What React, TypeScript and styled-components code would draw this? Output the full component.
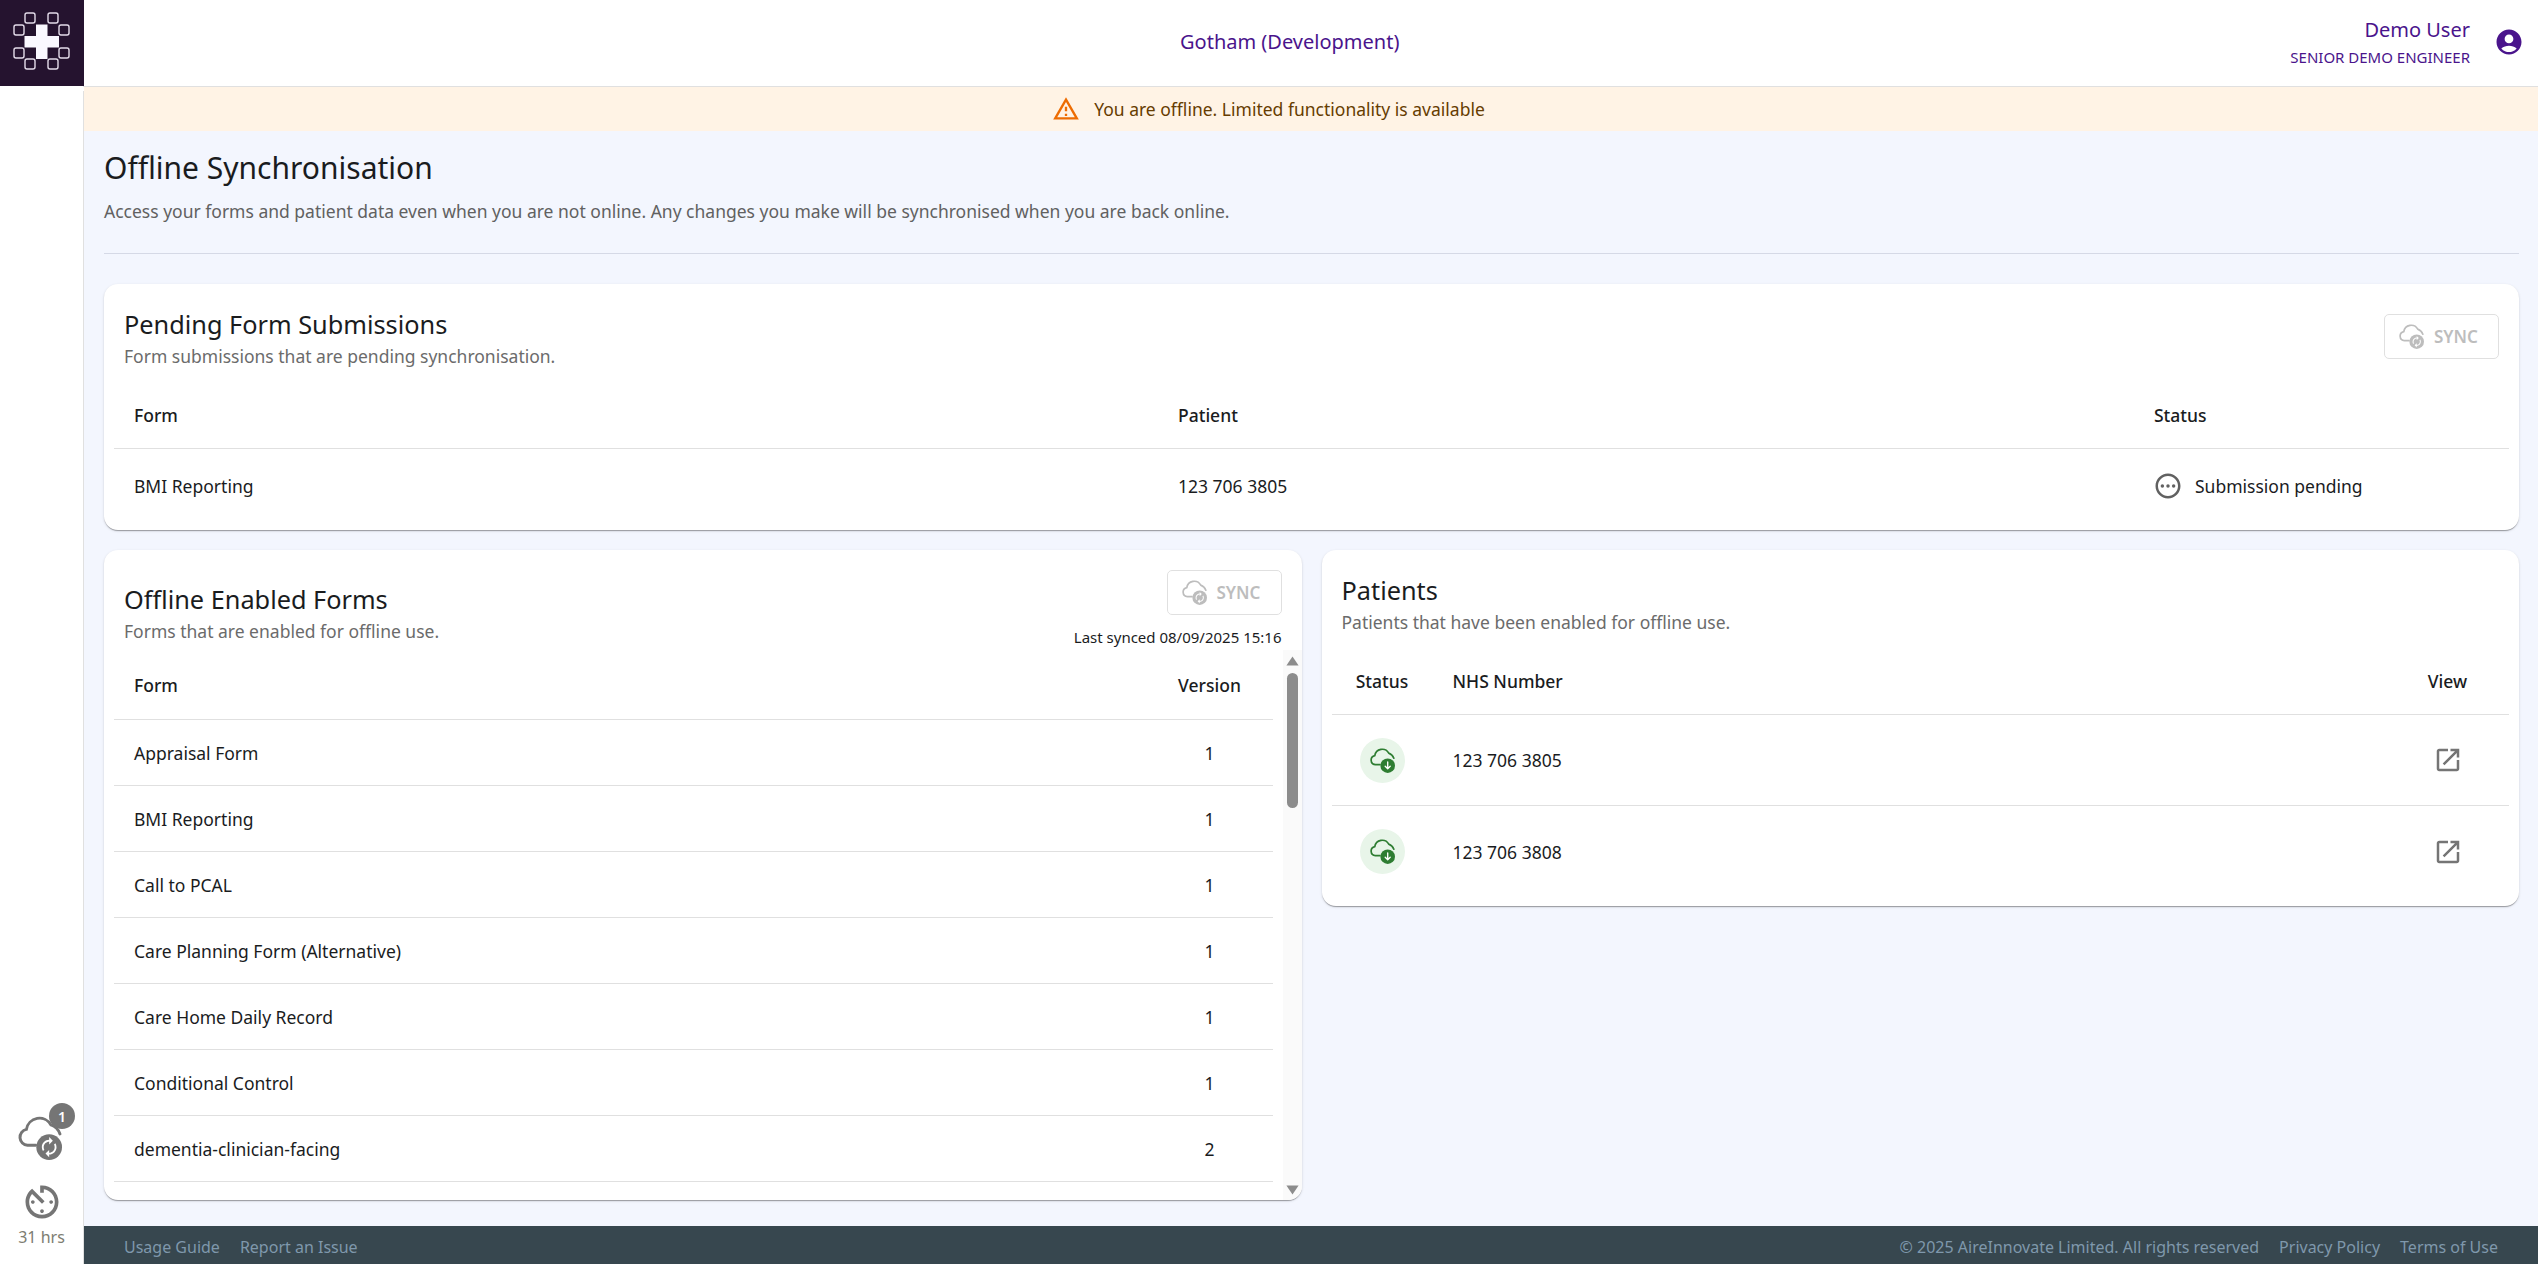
import styled, { createGlobalStyle } from "styled-components";

const GlobalStyle = createGlobalStyle`
  * {
    box-sizing: border-box;
  }

  html,
  body {
    margin: 0;
    height: 100%;
    overflow: hidden;
  }

  body {
    font-family: "Noto Sans", "Liberation Sans", sans-serif;
    font-size: 17.5px;
    color: #1a1c1e;
    background: #ffffff;
  }
`;

const Page = styled.div`
  display: flex;
  width: 100vw;
  height: 100vh;
`;

const Sidebar = styled.aside`
  display: flex;
  flex-direction: column;
  align-items: center;
  flex: 0 0 84px;
  padding-bottom: 17px;
  background: #ffffff;
  border-right: 1px solid #e0e0e0;
`;

const LogoBox = styled.div`
  flex: 0 0 87px;
  width: 84px;
  margin-right: -1px;
  background: #ffffff;
`;

const SidebarBottom = styled.div`
  display: flex;
  flex-direction: column;
  align-items: center;
  margin-top: auto;
`;

const CloudWrap = styled.div`
  position: relative;
  width: 44px;
  height: 44px;
  margin-left: -3px;
  color: #757575;
`;

const CountBadge = styled.span`
  position: absolute;
  top: -13px;
  right: -13px;
  display: flex;
  align-items: center;
  justify-content: center;
  width: 26px;
  height: 26px;
  border-radius: 50%;
  background: #757575;
  color: #ffffff;
  font-size: 14px;
  font-weight: 600;
`;

const TimerIcon = styled.svg`
  display: block;
  width: 44px;
  height: 44px;
  margin-top: 20px;
  fill: #757575;
`;

const TimerLabel = styled.div`
  margin-top: 3px;
  font-size: 16px;
  line-height: 20px;
  color: #7d7d72;
`;

const Content = styled.div`
  display: flex;
  flex-direction: column;
  flex: 1;
  min-width: 0;
`;

const Header = styled.header`
  display: grid;
  grid-template-columns: 1097px auto 1fr;
  align-items: center;
  flex: 0 0 87px;
  padding-bottom: 3px;
  border-bottom: 1px solid #e0e0e0;
  margin-left: -1px;
  color: #4a148c;
`;

const Tenant = styled.div`
  grid-column: 2;
  font-size: 20px;
`;

const UserBlock = styled.div`
  display: flex;
  align-items: center;
  justify-self: end;
  gap: 24px;
  padding-right: 14px;
`;

const UserText = styled.div`
  text-align: right;
`;

const UserName = styled.div`
  font-size: 20px;
  line-height: 26px;
`;

const UserRole = styled.div`
  margin-top: 4px;
  font-size: 15px;
  line-height: 20px;
`;

const AccountIcon = styled.svg`
  width: 30px;
  height: 30px;
  fill: #4a148c;
`;

const Banner = styled.div`
  display: flex;
  align-items: center;
  justify-content: center;
  gap: 14px;
  flex: 0 0 44px;
  padding-right: 85px;
  background: #fff3e5;
  color: #663c00;
`;

const WarnIcon = styled.svg`
  width: 28px;
  height: 28px;
  fill: #ed6c02;
`;

const Main = styled.main`
  display: flex;
  flex-direction: column;
  flex: 1;
  min-height: 0;
  padding: 17px 19px 26px 20px;
  background: #f3f6fe;
`;

const PageTitle = styled.h1`
  margin: 0;
  font-size: 30px;
  font-weight: 400;
  line-height: 40px;
`;

const PageSub = styled.p`
  margin: 11px 0 0;
  line-height: 24px;
  color: #616161;
`;

const Divider = styled.hr`
  width: 100%;
  margin: 30px 0;
  border: 0;
  border-top: 1px solid #d5d9e6;
`;

const Card = styled.section`
  display: flex;
  flex-direction: column;
  overflow: hidden;
  background: #ffffff;
  border-radius: 14px;
  box-shadow: 0 2px 1px -1px rgba(0, 0, 0, 0.2), 0 1px 1px rgba(0, 0, 0, 0.14),
    0 1px 3px rgba(0, 0, 0, 0.12);
`;

const CardHead = styled.div<{ $forms?: boolean }>`
  display: flex;
  justify-content: space-between;
  align-items: ${(p) => (p.$forms ? "flex-end" : "flex-start")};
  padding: ${(p) => (p.$forms ? "20px 20px 4px" : "24px 20px 13px")};
`;

const HeadText = styled.div<{ $forms?: boolean }>`
  margin-bottom: ${(p) => (p.$forms ? "3px" : "0")};
`;

const CardTitle = styled.h2`
  margin: 0;
  font-size: 25.3px;
  font-weight: 400;
  line-height: 32px;
`;

const CardSub = styled.p`
  margin: 4px 0 0;
  line-height: 24px;
  color: #6b6b6b;
`;

const SyncColumn = styled.div`
  display: flex;
  flex-direction: column;
  align-items: flex-end;
`;

const SyncButton = styled.button<{ $offset?: boolean }>`
  display: flex;
  align-items: center;
  gap: 10px;
  width: 115px;
  height: 45px;
  margin-top: ${(p) => (p.$offset ? "6px" : "0")};
  padding: 0 0 0 14px;
  background: transparent;
  border: 1px solid #e0e0e0;
  border-radius: 5px;
  color: #bdbdbd;
  font-family: inherit;
  font-size: 17px;
  font-weight: 600;
`;

const LastSynced = styled.div`
  margin-top: 13px;
  font-size: 15px;
  line-height: 18px;
`;

const TableWrap = styled.div`
  padding: 0 10px;
`;

const PendingWrap = styled(TableWrap)`
  padding-bottom: 7px;
`;

const Table = styled.table`
  width: 100%;
  table-layout: fixed;
  border-collapse: separate;
  border-spacing: 0;
`;

const Th = styled.th<{ $w?: number; $center?: boolean; $h: number }>`
  width: ${(p) => (p.$w ? `${p.$w}px` : "auto")};
  height: ${(p) => p.$h}px;
  padding: 0 20px;
  border-bottom: 1px solid #e0e0e0;
  font-weight: 500;
  text-align: ${(p) => (p.$center ? "center" : "left")};
`;

const Td = styled.td<{ $center?: boolean; $h: number; $last?: boolean }>`
  height: ${(p) => p.$h}px;
  padding: 0 20px;
  border-bottom: ${(p) => (p.$last ? "0" : "1px solid #e0e0e0")};
  text-align: ${(p) => (p.$center ? "center" : "left")};
`;

const StatusCell = styled.div`
  display: flex;
  align-items: center;
  gap: 12px;
`;

const PendingIcon = styled.svg`
  width: 30px;
  height: 30px;
  margin-left: -1px;
  fill: #616161;
`;

const Columns = styled.div`
  display: grid;
  grid-template-columns: 1fr 1fr;
  gap: 20px;
  align-items: start;
  flex: 1;
  min-height: 0;
  margin-top: 20px;
`;

const FormsCard = styled(Card)`
  height: 100%;
  min-height: 0;
`;

const FormsBody = styled.div`
  display: flex;
  flex: 1;
  min-height: 0;
`;

const FormsList = styled.div`
  flex: 1;
  min-width: 0;
  padding: 0 10px;
  overflow: hidden;
`;

const ScrollTrack = styled.div`
  display: flex;
  flex-direction: column;
  align-items: center;
  flex: 0 0 19px;
  padding: 6px 0 5px;
  background: #fafafa;
`;

const ScrollThumb = styled.div`
  flex: 0 0 135px;
  width: 11px;
  margin-top: 7px;
  margin-bottom: auto;
  border-radius: 6px;
  background: #8c8c8c;
`;

const ScrollArrow = styled.svg<{ $down?: boolean }>`
  display: block;
  width: 13px;
  height: 10px;
  fill: #8c8c8c;
  transform: ${(p) => (p.$down ? "rotate(180deg)" : "none")};
`;

const GreenCircle = styled.div`
  display: flex;
  align-items: center;
  justify-content: center;
  width: 45px;
  height: 45px;
  margin: 0 auto;
  border-radius: 50%;
  background: #e8f5e9;
  color: #2e7d32;
`;

const OpenIcon = styled.svg`
  display: block;
  width: 30px;
  height: 30px;
  margin: 0 auto;
  fill: #757575;
`;

const PatientsWrap = styled(TableWrap)`
  padding-bottom: 9px;
`;

const Footer = styled.footer`
  display: flex;
  align-items: center;
  justify-content: space-between;
  flex: 0 0 38px;
  padding: 4px 40px 0;
  background: #37474f;
  color: #7f98ac;
  font-size: 16px;
`;

const FooterGroup = styled.div`
  display: flex;
  gap: 20px;
`;

type CloudProps = { size: number; arrow?: boolean };

function CloudStatus({ size, arrow }: CloudProps) {
  return (
    <svg width={size} height={size} viewBox="0 0 24 24" fill="none">
      <path
        d="M9.6 16H5.2A4.4 4.4 0 0 1 4.6 7.3 A 7.2 7.2 0 0 1 18 4.9 Q 21.6 6.2 22.9 9.8"
        stroke="currentColor"
        strokeWidth="1.6"
        strokeLinecap="round"
      />
      <circle cx="17" cy="17" r="7" fill="currentColor" />
      {arrow ? (
        <path
          d="M17 13.4v6.4M14.6 17.5l2.4 2.4 2.4-2.4"
          stroke="#ffffff"
          strokeWidth="1.3"
          strokeLinecap="round"
          strokeLinejoin="round"
        />
      ) : (
        <path
          transform="translate(17 17) scale(-0.5 0.5) translate(-12 -12)"
          fill="#ffffff"
          d="M12 4V1L8 5l4 4V6c3.31 0 6 2.69 6 6 0 1.01-.25 1.97-.7 2.8l1.46 1.46C19.54 15.03 20 13.57 20 12c0-4.42-3.58-8-8-8zm0 14c-3.31 0-6-2.69-6-6 0-1.01.25-1.97.7-2.8L5.24 7.74C4.46 8.97 4 10.43 4 12c0 4.42 3.58 8 8 8v3l4-4-4-4v3z"
        />
      )}
    </svg>
  );
}

const logoSquares = [
  [25, 13],
  [48, 13],
  [14, 25],
  [59, 25],
  [14, 48],
  [59, 48],
  [25, 59],
  [48, 59],
];

function Logo() {
  return (
    <svg width="84" height="86" viewBox="0 0 84 86">
      <rect width="84" height="86" fill="#25132f" />
      <path
        d="M36 24.5h11.5V36H59v11.5H47.5V59H36V47.5H24.5V36H36z"
        fill="#faf8ff"
      />
      {logoSquares.map(([x, y]) => (
        <rect
          key={`${x}-${y}`}
          x={x}
          y={y}
          width="10"
          height="10"
          rx="2"
          fill="none"
          stroke="#e4dcea"
          strokeWidth="1.4"
        />
      ))}
    </svg>
  );
}

const forms = [
  { name: "Appraisal Form", version: 1 },
  { name: "BMI Reporting", version: 1 },
  { name: "Call to PCAL", version: 1 },
  { name: "Care Planning Form (Alternative)", version: 1 },
  { name: "Care Home Daily Record", version: 1 },
  { name: "Conditional Control", version: 1 },
  { name: "dementia-clinician-facing", version: 2 },
];

const patients = ["123 706 3805", "123 706 3808"];

export default function App() {
  return (
    <Page>
      <GlobalStyle />
      <Sidebar>
        <LogoBox>
          <Logo />
        </LogoBox>
        <SidebarBottom>
          <CloudWrap>
            <CloudStatus size={44} />
            <CountBadge>1</CountBadge>
          </CloudWrap>
          <TimerIcon viewBox="0 0 24 24">
            <path d="M11 17c0 .55.45 1 1 1s1-.45 1-1-.45-1-1-1-1 .45-1 1zm0-14v4h2V5.08c3.39.49 6 3.39 6 6.92 0 3.87-3.13 7-7 7s-7-3.13-7-7c0-1.68.59-3.22 1.58-4.42L12 13l1.41-1.41-6.8-6.8v.02C4.42 6.45 3 9.05 3 12c0 4.97 4.03 9 9 9 4.97 0 9-4.03 9-9s-4.03-9-9-9h-1zm7 9c0-.55-.45-1-1-1s-1 .45-1 1 .45 1 1 1 1-.45 1-1zM6 12c0 .55.45 1 1 1s1-.45 1-1-.45-1-1-1-1 .45-1 1z" />
          </TimerIcon>
          <TimerLabel>31 hrs</TimerLabel>
        </SidebarBottom>
      </Sidebar>

      <Content>
        <Header>
          <Tenant>Gotham (Development)</Tenant>
          <UserBlock>
            <UserText>
              <UserName>Demo User</UserName>
              <UserRole>SENIOR DEMO ENGINEER</UserRole>
            </UserText>
            <AccountIcon viewBox="0 0 24 24">
              <path d="M12 2C6.48 2 2 6.48 2 12s4.48 10 10 10 10-4.48 10-10S17.52 2 12 2zm0 4c1.93 0 3.5 1.57 3.5 3.5S13.93 13 12 13s-3.5-1.57-3.5-3.5S10.07 6 12 6zm0 14c-2.03 0-4.43-.82-6.14-2.88C7.55 15.8 9.68 15 12 15s4.45.8 6.14 2.12C16.43 19.18 14.03 20 12 20z" />
            </AccountIcon>
          </UserBlock>
        </Header>

        <Banner>
          <WarnIcon viewBox="0 0 24 24">
            <path d="M12 5.99 19.53 19H4.47L12 5.99M12 2 1 21h22L12 2zm1 14h-2v2h2v-2zm0-6h-2v4h2v-4z" />
          </WarnIcon>
          You are offline. Limited functionality is available
        </Banner>

        <Main>
          <PageTitle>Offline Synchronisation</PageTitle>
          <PageSub>
            Access your forms and patient data even when you are not online. Any
            changes you make will be synchronised when you are back online.
          </PageSub>
          <Divider />

          <Card>
            <CardHead>
              <div>
                <CardTitle>Pending Form Submissions</CardTitle>
                <CardSub>Form submissions that are pending synchronisation.</CardSub>
              </div>
              <SyncButton $offset disabled>
                <CloudStatus size={25} />
                SYNC
              </SyncButton>
            </CardHead>
            <PendingWrap>
              <Table>
                <thead>
                  <tr>
                    <Th $h={68} $w={1044}>
                      Form
                    </Th>
                    <Th $h={68} $w={976}>
                      Patient
                    </Th>
                    <Th $h={68}>Status</Th>
                  </tr>
                </thead>
                <tbody>
                  <tr>
                    <Td $h={74} $last>
                      BMI Reporting
                    </Td>
                    <Td $h={74} $last>
                      123 706 3805
                    </Td>
                    <Td $h={74} $last>
                      <StatusCell>
                        <PendingIcon viewBox="0 0 24 24">
                          <path d="M12 2C6.48 2 2 6.48 2 12s4.48 10 10 10 10-4.48 10-10S17.52 2 12 2zm0 18c-4.42 0-8-3.58-8-8s3.58-8 8-8 8 3.58 8 8-3.58 8-8 8z" />
                          <circle cx="7.5" cy="12" r="1.4" />
                          <circle cx="12" cy="12" r="1.4" />
                          <circle cx="16.5" cy="12" r="1.4" />
                        </PendingIcon>
                        Submission pending
                      </StatusCell>
                    </Td>
                  </tr>
                </tbody>
              </Table>
            </PendingWrap>
          </Card>

          <Columns>
            <FormsCard>
              <CardHead $forms>
                <HeadText $forms>
                  <CardTitle>Offline Enabled Forms</CardTitle>
                  <CardSub>Forms that are enabled for offline use.</CardSub>
                </HeadText>
                <SyncColumn>
                  <SyncButton disabled>
                    <CloudStatus size={25} />
                    SYNC
                  </SyncButton>
                  <LastSynced>Last synced 08/09/2025 15:16</LastSynced>
                </SyncColumn>
              </CardHead>
              <FormsBody>
                <FormsList>
                  <Table>
                    <thead>
                      <tr>
                        <Th $h={70}>Form</Th>
                        <Th $h={70} $w={126} $center>
                          Version
                        </Th>
                      </tr>
                    </thead>
                    <tbody>
                      {forms.map((form) => (
                        <tr key={form.name}>
                          <Td $h={66}>{form.name}</Td>
                          <Td $h={66} $center>
                            {form.version}
                          </Td>
                        </tr>
                      ))}
                    </tbody>
                  </Table>
                </FormsList>
                <ScrollTrack>
                  <ScrollArrow viewBox="0 0 13 10">
                    <path d="M6.5 0.5 12.6 9.5H0.4z" />
                  </ScrollArrow>
                  <ScrollThumb />
                  <ScrollArrow $down viewBox="0 0 13 10">
                    <path d="M6.5 0.5 12.6 9.5H0.4z" />
                  </ScrollArrow>
                </ScrollTrack>
              </FormsBody>
            </FormsCard>

            <Card>
              <CardHead>
                <div>
                  <CardTitle>Patients</CardTitle>
                  <CardSub>Patients that have been enabled for offline use.</CardSub>
                </div>
              </CardHead>
              <PatientsWrap>
                <Table>
                  <thead>
                    <tr>
                      <Th $h={68} $w={101} $center>
                        Status
                      </Th>
                      <Th $h={68}>NHS Number</Th>
                      <Th $h={68} $w={123} $center>
                        View
                      </Th>
                    </tr>
                  </thead>
                  <tbody>
                    {patients.map((nhs, i) => {
                      const last = i === patients.length - 1;
                      return (
                        <tr key={nhs}>
                          <Td $h={91} $last={last}>
                            <GreenCircle>
                              <CloudStatus size={25} arrow />
                            </GreenCircle>
                          </Td>
                          <Td $h={91} $last={last}>
                            {nhs}
                          </Td>
                          <Td $h={91} $last={last}>
                            <OpenIcon viewBox="0 0 24 24">
                              <path d="M19 19H5V5h7V3H5c-1.11 0-2 .9-2 2v14c0 1.1.89 2 2 2h14c1.1 0 2-.9 2-2v-7h-2v7zM14 3v2h3.59l-9.83 9.83 1.41 1.41L19 6.41V10h2V3h-7z" />
                            </OpenIcon>
                          </Td>
                        </tr>
                      );
                    })}
                  </tbody>
                </Table>
              </PatientsWrap>
            </Card>
          </Columns>
        </Main>

        <Footer>
          <FooterGroup>
            <span>Usage Guide</span>
            <span>Report an Issue</span>
          </FooterGroup>
          <FooterGroup>
            <span>© 2025 AireInnovate Limited. All rights reserved</span>
            <span>Privacy Policy</span>
            <span>Terms of Use</span>
          </FooterGroup>
        </Footer>
      </Content>
    </Page>
  );
}
